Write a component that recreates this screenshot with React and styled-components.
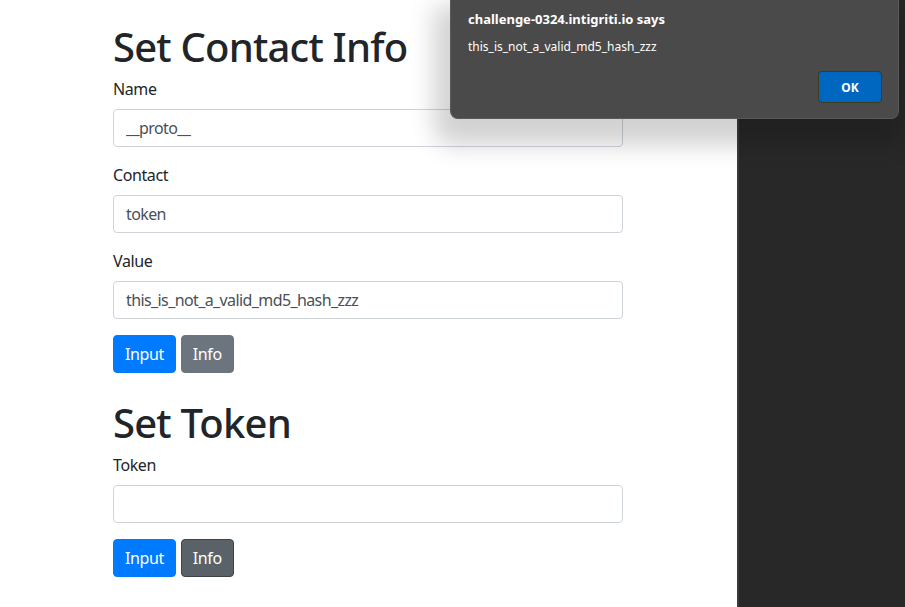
import React from 'react';
import styled, { createGlobalStyle } from 'styled-components';

const GlobalStyle = createGlobalStyle`
  html, body {
    margin: 0;
    padding: 0;
    height: 100%;
    overflow: hidden;
  }
  body {
    font-family: "Noto Sans", "Open Sans", sans-serif;
    background: #ffffff;
  }
`;

const Screen = styled.div`
  position: relative;
  display: flex;
  width: 905px;
  height: 607px;
  overflow: hidden;
`;

const Page = styled.main`
  width: 737px;
  flex: none;
  background: #ffffff;
  padding: 21px 0 0 113px;
  box-sizing: border-box;
  color: #212529;
`;

const Form = styled.form`
  width: 510px;
  margin-bottom: 24px;
`;

const Heading = styled.h1`
  margin: 0 0 6px;
  padding-top: 2px;
  font-size: 40px;
  font-weight: 500;
  line-height: 48px;
  letter-spacing: -0.8px;
  color: #212529;
`;

const Group = styled.div`
  margin-bottom: 16px;
`;

const Label = styled.label`
  display: block;
  margin-bottom: 8px;
  font-size: 16px;
  line-height: 24px;
  letter-spacing: -0.4px;
  color: #212529;
`;

const Field = styled.input`
  display: block;
  width: 100%;
  height: 38px;
  box-sizing: border-box;
  padding: 6px 12px;
  font-family: inherit;
  font-size: 16px;
  line-height: 24px;
  letter-spacing: -0.6px;
  color: #495057;
  background: #ffffff;
  border: 1px solid #ced4da;
  border-radius: 4px;
  outline: none;
`;

const Buttons = styled.div`
  display: flex;
  gap: 5px;
`;

const variants = {
  primary: { bg: '#007bff', border: '#007bff' },
  secondary: { bg: '#6c757d', border: '#6c757d' },
  focused: { bg: '#5a6268', border: '#3d4349' },
};

const Button = styled.button`
  height: 38px;
  padding: 0 11px;
  font-family: inherit;
  font-size: 16px;
  letter-spacing: -0.4px;
  color: #ffffff;
  background: ${({ $variant }) => variants[$variant].bg};
  border: 1px solid ${({ $variant }) => variants[$variant].border};
  border-radius: 4px;
`;

const DevPanel = styled.aside`
  flex: 1;
  background: #282828;
  border-left: 2px solid #3a3a3a;
`;

const Dialog = styled.div`
  position: absolute;
  top: 0;
  left: 450px;
  width: 449px;
  height: 119px;
  box-sizing: border-box;
  padding: 11px 16px 0 17px;
  background: #4a4a4a;
  border: 1px solid #5a5a5a;
  border-top: none;
  border-radius: 0 0 8px 8px;
  box-shadow: -6px 16px 24px 10px rgba(0, 0, 0, 0.18);
  color: #ffffff;
  font-family: "Noto Sans", "Open Sans", sans-serif;
`;

const DialogTitle = styled.div`
  font-size: 13px;
  font-weight: 700;
  line-height: 17px;
`;

const DialogText = styled.div`
  margin-top: 11px;
  font-size: 12px;
  line-height: 16px;
`;

const DialogFooter = styled.div`
  display: flex;
  justify-content: flex-end;
  margin-top: 16px;
`;

const OkButton = styled.button`
  width: 64px;
  height: 32px;
  font-family: inherit;
  font-size: 12px;
  font-weight: 700;
  color: #ffffff;
  background: #0067c0;
  border: 1px solid #3d3a20;
  border-radius: 4px;
`;

const ContactForm = () => (
  <Form>
    <Heading>Set Contact Info</Heading>
    <Group>
      <Label>Name</Label>
      <Field defaultValue="__proto__" />
    </Group>
    <Group>
      <Label>Contact</Label>
      <Field defaultValue="token" />
    </Group>
    <Group>
      <Label>Value</Label>
      <Field defaultValue="this_is_not_a_valid_md5_hash_zzz" />
    </Group>
    <Buttons>
      <Button type="button" $variant="primary">Input</Button>
      <Button type="button" $variant="secondary">Info</Button>
    </Buttons>
  </Form>
);

const TokenForm = () => (
  <Form>
    <Heading>Set Token</Heading>
    <Group>
      <Label>Token</Label>
      <Field defaultValue="" />
    </Group>
    <Buttons>
      <Button type="button" $variant="primary">Input</Button>
      <Button type="button" $variant="focused">Info</Button>
    </Buttons>
  </Form>
);

export default function App() {
  return (
    <Screen>
      <GlobalStyle />
      <Page>
        <ContactForm />
        <TokenForm />
      </Page>
      <DevPanel />
      <Dialog>
        <DialogTitle>challenge-0324.intigriti.io says</DialogTitle>
        <DialogText>this_is_not_a_valid_md5_hash_zzz</DialogText>
        <DialogFooter>
          <OkButton>OK</OkButton>
        </DialogFooter>
      </Dialog>
    </Screen>
  );
}
